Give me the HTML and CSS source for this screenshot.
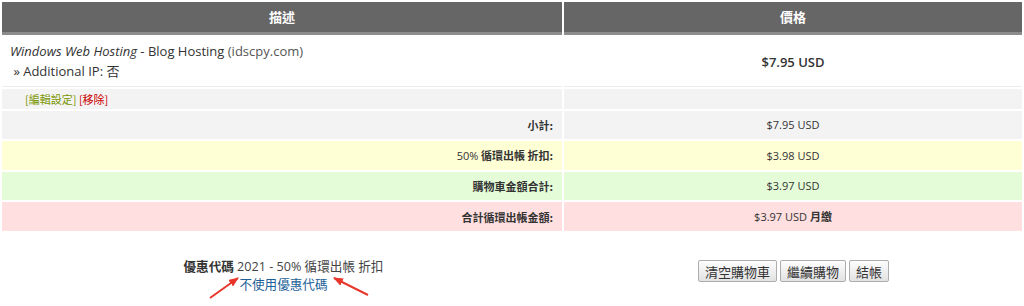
FILE: index.html
```html
<!DOCTYPE html>
<html>
<head>
<meta charset="utf-8">
<link rel="stylesheet" href="styles.css">
</head>
<body>
<div class="page">
<table class="cart">
  <colgroup><col class="c1"><col class="c2"></colgroup>
  <thead>
    <tr><th>描述</th><th>價格</th></tr>
  </thead>
  <tbody>
    <tr class="item">
      <td class="desc"><em>Windows Web Hosting</em> - Blog Hosting <span class="dom">(idscpy.com)</span><br>&nbsp;» Additional IP: 否</td>
      <td class="price">$7.95 USD</td>
    </tr>
    <tr class="edit">
      <td class="links"><a class="ed">[編輯設定]</a> <a class="rm">[移除]</a></td>
      <td></td>
    </tr>
    <tr class="sum gray">
      <td class="lbl">小計:</td><td class="amt">$7.95 USD</td>
    </tr>
    <tr class="sum yellow">
      <td class="lbl"><span class="num">50%</span> 循環出帳 折扣:</td><td class="amt">$3.98 USD</td>
    </tr>
    <tr class="sum green">
      <td class="lbl">購物車金額合計:</td><td class="amt">$3.97 USD</td>
    </tr>
    <tr class="sum pink">
      <td class="lbl">合計循環出帳金額:</td><td class="amt">$3.97 USD <b>月繳</b></td>
    </tr>
  </tbody>
</table>
<div class="bottom">
  <div class="promo">
    <div><b>優惠代碼</b> 2021 - 50% 循環出帳 折扣</div>
    <div><a class="nopromo">不使用優惠代碼</a></div>
  </div>
  <div class="actions">
    <button class="btn">清空購物車</button>
    <button class="btn">繼續購物</button>
    <button class="btn">結帳</button>
  </div>
</div>
<svg class="arrows" width="1024" height="306" viewBox="0 0 1024 306">
  <defs>
    <marker id="ah" markerWidth="10" markerHeight="8" refX="9" refY="4" orient="auto" markerUnits="userSpaceOnUse">
      <path d="M0,0 L10,4 L0,8 Z" fill="#e8362c"/>
    </marker>
  </defs>
  <line x1="210" y1="298" x2="238" y2="278" stroke="#e8362c" stroke-width="2" marker-end="url(#ah)"/>
  <line x1="368" y1="295" x2="334" y2="278" stroke="#e8362c" stroke-width="2" marker-end="url(#ah)"/>
</svg>
</div>
</body>
</html>
```
FILE: styles.css
```css
html, body { margin: 0; padding: 0; background: #fff; }
.page {
  position: relative;
  width: 1024px;
  height: 306px;
  font-family: "Open Sans", "Noto Sans CJK TC", sans-serif;
  color: #333;
  overflow: hidden;
}
.cart {
  width: 1024px;
  border-collapse: separate;
  border-spacing: 2px;
  table-layout: fixed;
}
.c1 { width: 560px; }
.c2 { width: 458px; }
.cart th {
  background: #666;
  color: #fff;
  font-family: "Noto Sans CJK TC", sans-serif;
  font-size: 13px;
  font-weight: bold;
  line-height: 30px;
  padding: 0;
  border-bottom: 3px solid #8c8c8c;
  text-align: center;
}
.cart td { padding: 0; }
.item td {
  border-bottom: 1px solid #ececec;
  line-height: 20px;
  font-size: 13px;
}
.item .desc { padding: 4px 8px 5px; color: #333; }
.item em { font-style: italic; }
.item .dom { color: #555; }
.item .price { text-align: center; font-weight: 600; }
.edit td { background: #f3f3f3; height: 20px; line-height: 20px; }
.links { padding-left: 23px !important; font-family: "Noto Sans CJK TC", sans-serif; font-size: 11px; }
.ed { color: #7a9600; }
.rm { color: #cc0000; }
.sum td { height: 28px; line-height: 28px; font-size: 11px; }
.lbl {
  text-align: right;
  padding-right: 9px !important;
  font-family: "Noto Sans CJK TC", sans-serif;
  font-weight: bold;
  color: #333;
}
.lbl .num { font-family: "Open Sans", sans-serif; font-weight: normal; }
.amt { text-align: center; color: #333; }
.amt b { font-family: "Noto Sans CJK TC", sans-serif; }
.gray td { background: #f3f3f3; }
.yellow td { background: #ffffd6; }
.green td { background: #e4fcd8; }
.pink td { background: #ffdfdf; }
.bottom {
  display: flex;
  padding: 25px 2px 0;
  gap: 2px;
}
.promo {
  width: 560px;
  text-align: center;
  font-size: 12.6px;
  line-height: 18px;
  color: #444;
  margin-left: 2px;
}
.promo b { color: #333; }
.nopromo { color: #1d5f98; }
.actions {
  width: 458px;
  display: flex;
  justify-content: center;
  gap: 3px;
  padding-top: 2px;
}
.btn {
  height: 22px;
  padding: 0 6px;
  font-family: "Noto Sans CJK TC", sans-serif;
  font-size: 13px;
  color: #333;
  border: 1px solid #adadad;
  border-radius: 2px;
  background: linear-gradient(#fdfdfd, #e2e2e2);
}
.arrows { position: absolute; left: 0; top: 0; pointer-events: none; }
```
